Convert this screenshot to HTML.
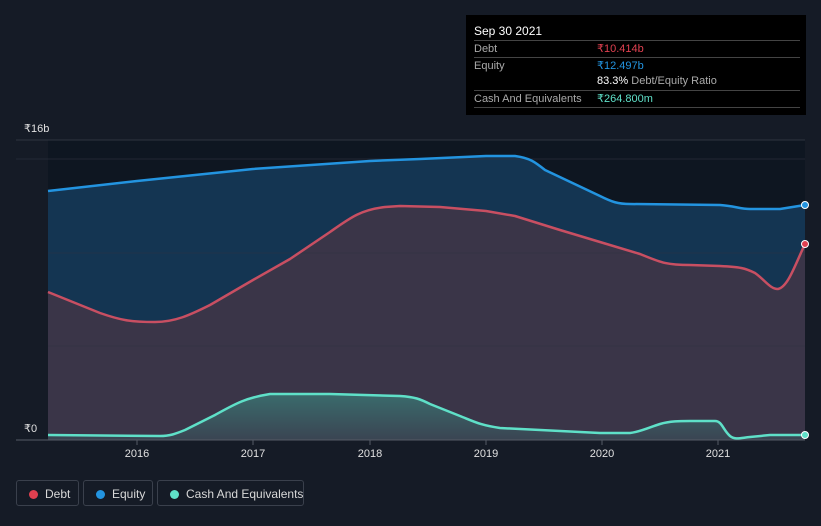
<!DOCTYPE html><html><head><style>
body{margin:0;width:821px;height:526px;background:#151b26;font-family:"Liberation Sans",sans-serif;overflow:hidden;position:relative}
.t{position:absolute;left:466px;top:15px;width:340px;height:100px;background:#000;color:#fff;font-size:11px}
.r{position:absolute;left:8px;width:326px;border-top:1px solid #444;height:16px;line-height:16px}
.r span{position:absolute;left:123px}
.lg{position:absolute;top:480px;height:26px;border:1px solid #3a404c;border-radius:3px;color:#d8d8d8;font-size:12px;line-height:26px;box-sizing:border-box;white-space:nowrap}
.lg i{position:absolute;left:12px;top:9px;width:9px;height:9px;border-radius:50%}
</style></head><body>
<svg width="821" height="526" style="position:absolute;left:0;top:0">
<defs><linearGradient id="g" x1="0" y1="0" x2="0" y2="1"><stop offset="0" stop-color="#3ad0b0" stop-opacity=".35"/><stop offset="1" stop-color="#3ad0b0" stop-opacity=".1"/></linearGradient></defs>
<rect x="48" y="140" width="757" height="300" fill="#0e1621"/>
<path d="M48,191 L137,181 L253,169 L370,161 L420,159 L486,156 L515,156 C530,158 535,162 545,170 L600,196 C612,202 618,204 630,204 L720,205 C735,206 740,209 750,209 L780,209 L805,205 L805,440 L48,440Z" fill="#143552"/>
<path d="M48,292 L100,313 C120,320 130,322 155,322 C175,322 190,315 210,305 L253,280 L290,259 L330,232 C350,218 360,210 385,207 L400,206 L440,207 L486,211 L515,216 L560,230 L600,242 L640,254 C660,262 665,265 690,265 L720,266 C740,267 745,268 755,273 C765,280 770,289 778,289 C788,287 795,265 805,244 L805,440 L48,440Z" fill="#3a3548"/>
<path d="M48,435 L160,436 C170,436 175,434 185,430 L215,415 C235,404 245,398 270,394 L330,394 L400,396 C415,397 420,399 430,404 L460,416 C475,422 480,425 500,428 L600,433 L630,433 C640,432 650,427 660,424 C670,421 680,421 690,421 L715,421 C722,421 723,430 730,436 C735,440 740,438 750,437 L770,435 L805,435 L805,440 L48,440Z" fill="url(#g)"/>
<g stroke="#2e3440" stroke-width="1"><line x1="16" y1="140" x2="805" y2="140"/><line x1="16" y1="159" x2="805" y2="159" stroke-opacity=".6"/><line x1="48" y1="253" x2="805" y2="253" stroke-opacity=".5"/><line x1="48" y1="346" x2="805" y2="346" stroke-opacity=".5"/><line x1="16" y1="440" x2="805" y2="440" stroke="#555b66"/></g>
<g stroke="#555b66"><line x1="137" y1="440" x2="137" y2="445"/><line x1="253" y1="440" x2="253" y2="445"/><line x1="370" y1="440" x2="370" y2="445"/><line x1="486" y1="440" x2="486" y2="445"/><line x1="602" y1="440" x2="602" y2="445"/><line x1="718" y1="440" x2="718" y2="445"/></g>
<g fill="none" stroke-width="2.5" stroke-linejoin="round">
<path d="M48,191 L137,181 L253,169 L370,161 L420,159 L486,156 L515,156 C530,158 535,162 545,170 L600,196 C612,202 618,204 630,204 L720,205 C735,206 740,209 750,209 L780,209 L805,205" stroke="#2394e0"/>
<path d="M48,292 L100,313 C120,320 130,322 155,322 C175,322 190,315 210,305 L253,280 L290,259 L330,232 C350,218 360,210 385,207 L400,206 L440,207 L486,211 L515,216 L560,230 L600,242 L640,254 C660,262 665,265 690,265 L720,266 C740,267 745,268 755,273 C765,280 770,289 778,289 C788,287 795,265 805,244" stroke="#c84f62"/>
<path d="M48,435 L160,436 C170,436 175,434 185,430 L215,415 C235,404 245,398 270,394 L330,394 L400,396 C415,397 420,399 430,404 L460,416 C475,422 480,425 500,428 L600,433 L630,433 C640,432 650,427 660,424 C670,421 680,421 690,421 L715,421 C722,421 723,430 730,436 C735,440 740,438 750,437 L770,435 L805,435" stroke="#5fe0c8"/>
</g>
<circle cx="805" cy="205" r="3.5" fill="#2394e0" stroke="#fff" stroke-width="1"/>
<circle cx="805" cy="244" r="3.5" fill="#e04050" stroke="#fff" stroke-width="1"/>
<circle cx="805" cy="435" r="3.5" fill="#5fe0c8" stroke="#fff" stroke-width="1"/>
<g fill="#e0e0e0" font-size="11" font-family="Liberation Sans,sans-serif">
<text x="24" y="132">₹16b</text><text x="24" y="432">₹0</text>
<g text-anchor="middle"><text x="137" y="457">2016</text><text x="253" y="457">2017</text><text x="370" y="457">2018</text><text x="486" y="457">2019</text><text x="602" y="457">2020</text><text x="718" y="457">2021</text></g>
</g></svg>
<div class="t">
<div style="position:absolute;left:8px;top:9px;font-size:12px">Sep 30 2021</div>
<div class="r" style="top:25px;color:#aaa">Debt<span style="color:#e04050">₹10.414b</span></div>
<div class="r" style="top:42px;color:#aaa">Equity<span style="color:#2394e0">₹12.497b</span></div>
<div class="r" style="top:58px;border:none;color:#aaa"><span><b style="color:#fff;font-weight:normal">83.3%</b> Debt/Equity Ratio</span></div>
<div class="r" style="top:75px;color:#aaa;border-bottom:1px solid #444">Cash And Equivalents<span style="color:#5fe0c8">₹264.800m</span></div>
</div>
<div class="lg" style="left:16px;width:63px"><i style="background:#e04050"></i><span style="position:absolute;left:28px">Debt</span></div>
<div class="lg" style="left:83px;width:70px"><i style="background:#2394e0"></i><span style="position:absolute;left:28px">Equity</span></div>
<div class="lg" style="left:157px;width:147px"><i style="background:#5fe0c8"></i><span style="position:absolute;left:28px">Cash And Equivalents</span></div>
</body></html>
